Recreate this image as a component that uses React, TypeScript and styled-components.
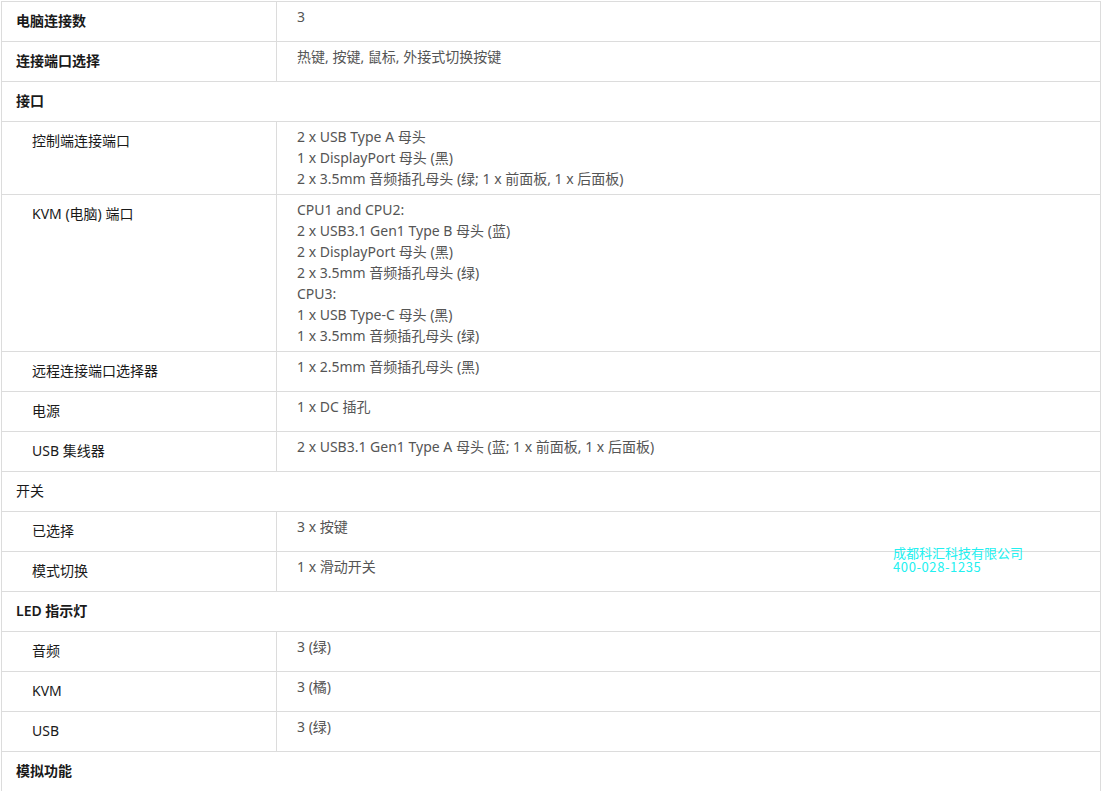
import styled, { createGlobalStyle } from "styled-components"

const GlobalStyle = createGlobalStyle`
    body {
        margin: 0;
        background: #fff;
        font-family: "Noto Sans", "Noto Sans CJK SC", sans-serif;
    }
`

type SpecRow =
    | { kind: "section"; label: string; bold?: boolean }
    | { kind: "item"; label: string; values: string[]; indent?: boolean; bold?: boolean }

const specs: SpecRow[] = [
    { kind: "item", label: "电脑连接数", values: ["3"], bold: true },
    { kind: "item", label: "连接端口选择", values: ["热键, 按键, 鼠标, 外接式切换按键"], bold: true },
    { kind: "section", label: "接口", bold: true },
    {
        kind: "item", label: "控制端连接端口", indent: true,
        values: ["2 x USB Type A 母头", "1 x DisplayPort 母头 (黑)", "2 x 3.5mm 音频插孔母头 (绿; 1 x 前面板, 1 x 后面板)"],
    },
    {
        kind: "item", label: "KVM (电脑) 端口", indent: true,
        values: [
            "CPU1 and CPU2:",
            "2 x USB3.1 Gen1 Type B 母头 (蓝)",
            "2 x DisplayPort 母头 (黑)",
            "2 x 3.5mm 音频插孔母头 (绿)",
            "CPU3:",
            "1 x USB Type-C 母头 (黑)",
            "1 x 3.5mm 音频插孔母头 (绿)",
        ],
    },
    { kind: "item", label: "远程连接端口选择器", indent: true, values: ["1 x 2.5mm 音频插孔母头 (黑)"] },
    { kind: "item", label: "电源", indent: true, values: ["1 x DC 插孔"] },
    { kind: "item", label: "USB 集线器", indent: true, values: ["2 x USB3.1 Gen1 Type A 母头 (蓝; 1 x 前面板, 1 x 后面板)"] },
    { kind: "section", label: "开关" },
    { kind: "item", label: "已选择", indent: true, values: ["3 x 按键"] },
    { kind: "item", label: "模式切换", indent: true, values: ["1 x 滑动开关"] },
    { kind: "section", label: "LED 指示灯", bold: true },
    { kind: "item", label: "音频", indent: true, values: ["3 (绿)"] },
    { kind: "item", label: "KVM", indent: true, values: ["3 (橘)"] },
    { kind: "item", label: "USB", indent: true, values: ["3 (绿)"] },
    { kind: "section", label: "模拟功能", bold: true },
]

export default function App() {
    return (
        <Page>
            <GlobalStyle />
            <Table>
                {specs.map((row, i) =>
                    row.kind === "section" ? (
                        <Row key={i}>
                            <SectionCell $bold={row.bold}>{row.label}</SectionCell>
                        </Row>
                    ) : (
                        <Row key={i}>
                            <Label $indent={row.indent} $bold={row.bold}>{row.label}</Label>
                            <Value>
                                {row.values.map((v, j) => (
                                    <Line key={j}>{v}</Line>
                                ))}
                            </Value>
                        </Row>
                    )
                )}
            </Table>
            <Watermark>
                <span>成都科汇科技有限公司</span>
                <Phone>400-028-1235</Phone>
            </Watermark>
        </Page>
    )
}

const Page = styled.div`
    position: relative;
    padding: 1px 0 0 1px;
    width: 1100px;
    height: 790px;
    overflow: hidden;
`
const Table = styled.div`
    display: flex;
    flex-direction: column;
    width: 1100px;
    border-top: 1px solid #dcdcdc;
    border-left: 1px solid #dcdcdc;
    border-right: 1px solid #dcdcdc;
    box-sizing: border-box;
`
const Row = styled.div`
    display: grid;
    grid-template-columns: 275px 1fr;
    border-bottom: 1px solid #dcdcdc;
    font-size: 14px;
`
const Label = styled.div<{ $indent?: boolean; $bold?: boolean }>`
    padding: 9px 0 10px ${(p) => (p.$indent ? "30px" : "14px")};
    line-height: 20px;
    color: #1a1a1a;
    font-weight: ${(p) => (p.$bold ? 600 : 400)};
    border-right: 1px solid #dcdcdc;
`
const SectionCell = styled(Label)`
    grid-column: 1 / -1;
    border-right: none;
`
const Value = styled.div`
    display: flex;
    flex-direction: column;
    padding: 4px 20px 5px 20px;
    line-height: 21px;
    color: #555;
`
const Line = styled.span`
    white-space: nowrap;
`
const Watermark = styled.div`
    position: absolute;
    left: 893px;
    top: 546px;
    display: flex;
    flex-direction: column;
    font-family: "Noto Sans CJK SC", sans-serif;
    font-size: 13px;
    line-height: 14px;
    color: #22f0f0;
`
const Phone = styled.span`
    letter-spacing: 0.6px;
`
